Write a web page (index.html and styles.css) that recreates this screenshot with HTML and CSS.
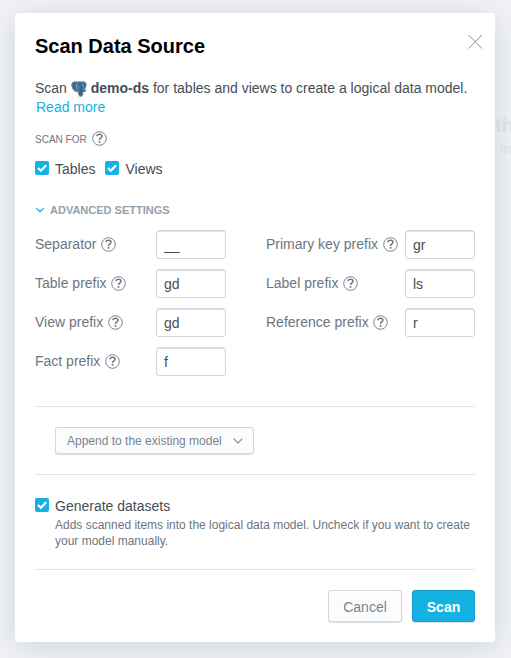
FILE: index.html
```html
<!DOCTYPE html>
<html lang="en">
<head>
<meta charset="utf-8">
<title>Scan Data Source</title>
<link rel="stylesheet" href="styles.css">
</head>
<body>
<svg class="defs" width="0" height="0" aria-hidden="true">
  <symbol id="help" viewBox="0 0 15 15"><circle cx="7.5" cy="7.5" r="6.800" fill="none" stroke="currentColor" stroke-width=".9"/><path d="M4.900 5.300C5 4 6 3.300 7.500 3.300s2.500.8 2.500 2C10 6.900 7.500 6.900 7.500 8.900" fill="none" stroke="currentColor" stroke-width="1.500"/><path d="M6.700 10h1.700v1.700H6.700z" fill="currentColor"/></symbol>
  <symbol id="check" viewBox="0 0 14 14"><path d="M3 7l2.800 2.700 5.400-5.500" fill="none" stroke="#fff" stroke-width="2.200"/></symbol>
</svg>
<div class="backdrop"><div class="back-title">th</div><div class="back-text">. m</div></div>
<main class="dialog">
  <header class="header">
    <h1>Scan Data Source</h1>
    <button class="close" aria-label="Close"><svg width="16" height="16" viewBox="0 0 16 16"><path d="M1.500 1l13.500 13.500M15 1L1.500 14.500" stroke="#8b8e9c" stroke-width="1" fill="none"/></svg></button>
  </header>
  <p class="intro">Scan <svg class="pg" width="16" height="16" viewBox="0 0 16 16"><path d="M2.200 1.200C4 .5 5.500.7 6.500 1.100 8 .6 9.300.6 10.500 1c2-.5 3.700-.1 4.400 1.200.7 1.600-.3 5-1.500 6.800l1.700.5c-.4 1-1.600 1.300-3.100 1.200-.3 2.500 0 4.400-2 4.600-2 .3-2.600-1.100-2.600-4.600-1 .3-2.300.2-3-.3C2.400 9.800.5 5.500.8 3.200c.1-1 .6-1.600 1.400-2z" fill="#336791" stroke="#85898f" stroke-width="1"/><path d="M6.500 1.500C5 3 5.200 5.500 5.400 7.200c.1 1-.7 1.700-.9 2.500M10.500 1.500c1.800 1.500 2.400 3.500 1.800 5.200-.3 1 .1 1.800.8 2.300M5.300 4.600c1-.6 2.200-.3 2.300.7.2 1.800-.8 2.700.2 4.500M10.200 4.500h1.200" stroke="#a9bdce" stroke-width=".6" fill="none"/></svg> <b>demo-ds</b> for tables and views to create a logical data model.<br><a href="#">Read more</a></p>
  <div class="scan-for"><span>SCAN FOR</span><svg class="help"><use href="#help"/></svg></div>
  <div class="checks">
    <label class="check-label"><svg class="box"><use href="#check"/></svg>Tables</label>
    <label class="check-label"><svg class="box"><use href="#check"/></svg>Views</label>
  </div>
  <div class="advanced"><svg width="10" height="8" viewBox="0 0 10 8"><path d="M1.200 2.200L5 5.600l3.800-3.400" fill="none" stroke="#14b2e2" stroke-width="1.300"/></svg>ADVANCED SETTINGS</div>
  <div class="settings">
    <div class="column">
      <div class="field"><label>Separator</label><svg class="help"><use href="#help"/></svg><input value="__"></div>
      <div class="field"><label>Table prefix</label><svg class="help"><use href="#help"/></svg><input value="gd"></div>
      <div class="field"><label>View prefix</label><svg class="help"><use href="#help"/></svg><input value="gd"></div>
      <div class="field"><label>Fact prefix</label><svg class="help"><use href="#help"/></svg><input value="f"></div>
    </div>
    <div class="column">
      <div class="field"><label>Primary key prefix</label><svg class="help"><use href="#help"/></svg><input value="gr"></div>
      <div class="field"><label>Label prefix</label><svg class="help"><use href="#help"/></svg><input value="ls"></div>
      <div class="field"><label>Reference prefix</label><svg class="help"><use href="#help"/></svg><input value="r"></div>
    </div>
  </div>
  <div class="mode">
    <button class="select">Append to the existing model<svg width="10" height="8" viewBox="0 0 10 8"><path d="M.8 1.800L5 6l4.200-4.200" fill="none" stroke="#94a1ad" stroke-width="1.500"/></svg></button>
  </div>
  <div class="generate">
    <label class="check-label"><svg class="box"><use href="#check"/></svg>Generate datasets</label>
    <p class="hint">Adds scanned items into the logical data model. Uncheck if you want to create your model manually.</p>
  </div>
  <footer class="footer">
    <button class="button">Cancel</button>
    <button class="button primary">Scan</button>
  </footer>
</main>
</body>
</html>
```
FILE: styles.css
```css
* { box-sizing: border-box; }
body {
  margin: 0;
  height: 658px;
  padding: 13px 16px 16px 15px;
  overflow: hidden;
  background: #f1f2f4;
  color: #464e56;
  font: 14px/19px "Liberation Sans", Arial, sans-serif;
}
.defs { position: absolute; }
.backdrop { position: absolute; top: 113px; left: 494px; width: 17px; overflow: hidden; white-space: nowrap; color: #e3e5e9; }
.back-title { font: bold 20px/24px "Liberation Sans", Arial, sans-serif; padding-left: 1px; }
.back-text { font-size: 14px; line-height: 24px; margin-left: -2px; }
.dialog {
  position: relative;
  width: 480px;
  height: 629px;
  padding: 20px 20px 0;
  border-radius: 3px;
  background: #fff;
  box-shadow: 0 5px 30px rgba(20, 56, 93, .15);
}
.header { display: flex; justify-content: space-between; height: 46px; }
h1 { margin: 0; color: #000; font-size: 20px; line-height: 26px; }
button { font-family: inherit; }
.close { width: 16px; height: 16px; margin: 1px -8px 0 0; padding: 0; border: 0; background: none; }
.close svg { display: block; }
.intro { height: 38px; margin: 0; white-space: nowrap; }
.pg { height: 16px; margin: -3px 0; vertical-align: -1px; }
a { margin-left: 1px; color: #14b2e2; text-decoration: none; }
.help { flex: none; width: 15px; height: 15px; color: #6d7680; }
.scan-for { display: flex; align-items: center; gap: 5px; height: 14px; margin-top: 15px; color: #6d7680; font-size: 10px; line-height: 14px; }
.scan-for span { padding-top: 1px; }
.scan-for .help { margin-top: -1px; }
.checks { display: flex; gap: 10px; margin-top: 13px; }
.check-label { display: flex; align-items: flex-start; gap: 6px; line-height: 20px; }
.box { width: 14px; height: 14px; margin-top: 2px; border-radius: 2px; background: #14b2e2; }
.advanced { display: flex; align-items: center; gap: 5px; height: 16px; margin-top: 23px; color: #94a1ad; font-size: 11px; font-weight: bold; line-height: 16px; }
.settings { display: grid; grid-template-columns: 191px 209px; gap: 40px; margin-top: 12px; }
.field { display: flex; align-items: center; gap: 4px; height: 29px; margin-bottom: 10px; color: #6d7680; }
.field label { margin-top: -1px; }
.field .help { margin: -1px 0 0 .7px; }
.field input {
  width: 70px;
  height: 29px;
  margin-left: auto;
  padding: 1px 7px 0;
  border: 1px solid #ccd8e2;
  border-radius: 3px;
  box-shadow: inset 0 1px 1px rgba(31, 52, 73, .15);
  color: #464e56;
  font: inherit;
}
.mode { height: 69px; margin-top: 20px; padding: 20px; border: solid #dde4eb; border-width: 1px 0; }
.select {
  display: flex;
  align-items: center;
  gap: 11px;
  width: 199px;
  height: 27px;
  padding: 0 11px;
  border: 1px solid #ccd8e2;
  border-radius: 3px;
  background: #fcfcfd;
  box-shadow: 0 1px 1px rgba(20, 56, 93, .15);
  color: #778491;
  font-size: 12px;
  white-space: nowrap;
}
.select svg { flex: none; margin-top: 1px; }
.generate { height: 95px; padding-top: 21px; border-bottom: 1px solid #dde4eb; }
.hint { margin: 1px 0 0 20px; color: #6d7680; font-size: 12px; line-height: 16px; }
.footer { display: flex; justify-content: flex-end; gap: 10px; margin-top: 20px; }
.button {
  width: 74px;
  height: 32px;
  padding: 2px 0 0;
  border: 1px solid #ccd8e2;
  border-radius: 3px;
  background: #fcfcfd;
  box-shadow: 0 1px 1px rgba(20, 56, 93, .15);
  color: #778491;
  font-size: 14px;
}
.primary { width: 63px; border-color: #139fcc; background: #14b2e2; color: #fff; font-weight: bold; }
```
